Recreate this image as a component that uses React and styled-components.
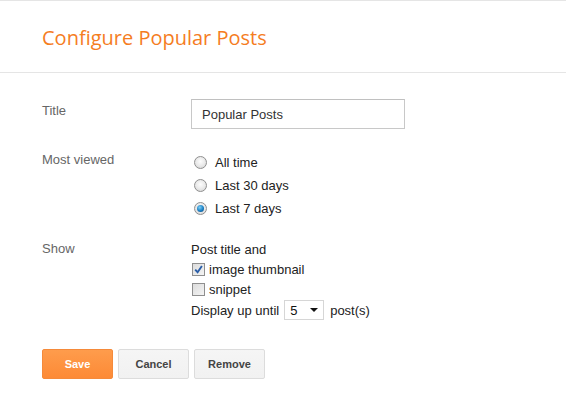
import React from 'react';
import styled, { createGlobalStyle } from 'styled-components';

const GlobalStyle = createGlobalStyle`
  body {
    margin: 0;
    background: #fff;
    font-family: "Liberation Sans", Arial, sans-serif;
    font-size: 13px;
    color: #333;
  }
`;

const Page = styled.div`
  width: 566px;
  height: 410px;
  border-top: 1px solid #e5e5e5;
  box-sizing: border-box;
  overflow: hidden;
`;

const Header = styled.div`
  height: 72px;
  box-sizing: border-box;
  padding: 23px 42px 0;
  border-bottom: 1px solid #e5e5e5;
`;

const Heading = styled.h1`
  margin: 0;
  font-family: "Open Sans", sans-serif;
  font-weight: 400;
  font-size: 20px;
  line-height: 28px;
  color: #f57d1f;
`;

const Form = styled.div`
  padding: 26px 42px 0;
`;

const Row = styled.div`
  display: grid;
  grid-template-columns: 149px 1fr;
  margin-bottom: ${p => p.gap || 0}px;
`;

const Label = styled.div`
  color: #666;
  line-height: 16px;
  padding-top: ${p => p.top || 0}px;
`;

const TextInput = styled.input`
  width: 214px;
  height: 30px;
  box-sizing: border-box;
  border: 1px solid #c8c8c8;
  border-top-color: #c0c0c0;
  padding: 0 10px;
  font-family: "Liberation Sans", Arial, sans-serif;
  font-size: 13px;
  color: #333;
  outline: none;
`;

const Options = styled.div`
  display: flex;
  flex-direction: column;
`;

const Option = styled.label`
  display: flex;
  align-items: center;
  height: ${p => p.h || 23}px;
  color: #222;
`;

const Radio = styled.span`
  width: 11px;
  height: 11px;
  margin: 0 8px 0 3px;
  border-radius: 50%;
  border: 1px solid #8f8f8f;
  background: radial-gradient(circle at 50% 40%, #fdfdfd 0%, #e8e8e8 55%, #cfcfcf 100%);
  display: flex;
  align-items: center;
  justify-content: center;

  &::after {
    content: '';
    display: ${p => (p.checked ? 'block' : 'none')};
    width: 7px;
    height: 7px;
    border-radius: 50%;
    background: radial-gradient(circle at 40% 35%, #7ed0f6 0%, #1a7fc4 55%, #0b3f70 100%);
  }
`;

const Check = styled.span`
  width: 11px;
  height: 11px;
  margin: 0 4px 0 1px;
  border: 1px solid #8f8f8f;
  background: linear-gradient(135deg, #dcdcdc 0%, #f4f4f4 100%);
  display: flex;
  align-items: center;
  justify-content: center;
`;

const Plain = styled.div`
  height: ${p => p.h || 20}px;
  display: flex;
  align-items: center;
  color: #222;
`;

const SelectBox = styled.div`
  width: 40px;
  height: 20px;
  box-sizing: border-box;
  margin: 0 6px 0 5px;
  border: 1px solid #d6d6d6;
  padding: 0 5px 0 5px;
  display: flex;
  align-items: center;
  justify-content: space-between;
  color: #111;
  font-size: 13px;

  &::after {
    content: '';
    border-left: 4px solid transparent;
    border-right: 4px solid transparent;
    border-top: 4px solid #111;
  }
`;

const Buttons = styled.div`
  display: flex;
  gap: 5px;
  margin-top: 28px;
`;

const Button = styled.button`
  width: 71px;
  height: 30px;
  box-sizing: border-box;
  border-radius: 2px;
  font-family: "Liberation Sans", Arial, sans-serif;
  font-size: 11px;
  font-weight: 700;
  cursor: pointer;
  border: 1px solid ${p => (p.primary ? '#f58a3a' : '#dcdcdc')};
  color: ${p => (p.primary ? '#fff' : '#444')};
  background: ${p =>
    p.primary ? 'linear-gradient(#fe9c4c, #fd8a36)' : 'linear-gradient(#f5f5f5, #f1f1f1)'};
`;

const Tick = () => (
  <svg width="9" height="9" viewBox="0 0 9 9">
    <path d="M1.2 4.6 L3.6 7.2 L7.9 1" fill="none" stroke="#2a5ea8" strokeWidth="1.9" />
  </svg>
);

const App = () => (
  <Page>
    <GlobalStyle />
    <Header>
      <Heading>Configure Popular Posts</Heading>
    </Header>
    <Form>
      <Row gap={22}>
        <Label top={4}>Title</Label>
        <TextInput defaultValue="Popular Posts" />
      </Row>
      <Row gap={19}>
        <Label top={1}>Most viewed</Label>
        <Options>
          <Option><Radio />All time</Option>
          <Option><Radio />Last 30 days</Option>
          <Option><Radio checked />Last 7 days</Option>
        </Options>
      </Row>
      <Row>
        <Label top={2}>Show</Label>
        <Options>
          <Plain h={20}>Post title and</Plain>
          <Option h={20}><Check><Tick /></Check>image thumbnail</Option>
          <Option h={20}><Check />snippet</Option>
          <Plain h={22}>
            Display up until<SelectBox>5</SelectBox>post(s)
          </Plain>
        </Options>
      </Row>
      <Buttons>
        <Button primary>Save</Button>
        <Button>Cancel</Button>
        <Button>Remove</Button>
      </Buttons>
    </Form>
  </Page>
);

export default App;
